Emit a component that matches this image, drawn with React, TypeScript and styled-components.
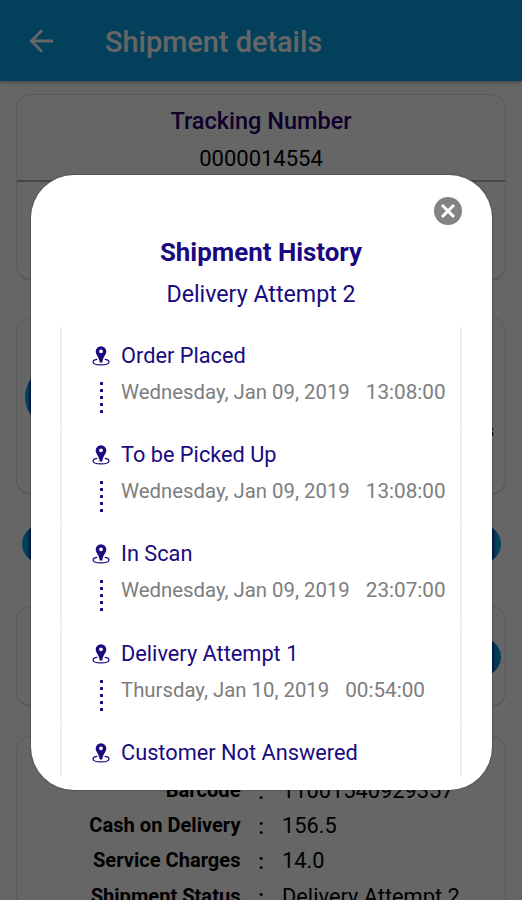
import React from "react";
import styled, { createGlobalStyle } from "styled-components";

const Global = createGlobalStyle`
  *, *::before, *::after { box-sizing: border-box; }
  body { margin: 0; background: #fff; }
`;

const NAVY = "#190a80";

const Screen = styled.div`
  position: relative;
  width: 522px;
  height: 900px;
  overflow: hidden;
  display: flex;
  flex-direction: column;
  background: #fff;
  font-family: Roboto, "Liberation Sans", sans-serif;
  color: #000;
`;

const AppBar = styled.header`
  flex: none;
  display: flex;
  align-items: center;
  gap: 52px;
  height: 81px;
  padding: 3px 28px 0;
  background: #07a0e6;
  color: #fff;
  box-shadow: 0 1px 4px rgba(0, 0, 0, 0.4);
`;

const BackIcon = styled.svg`
  flex: none;
  width: 25px;
  height: 26px;
  margin-top: -3px;
`;

const AppTitle = styled.h1`
  margin: 0;
  font-size: 28.9px;
  font-weight: 500;
  line-height: 34px;
`;

const Content = styled.main`
  flex: none;
  display: flex;
  flex-direction: column;
  padding: 13px 16px 0;
`;

const Card = styled.section<{ $height: number; $gap: number }>`
  flex: none;
  display: flex;
  flex-direction: column;
  width: 490px;
  height: ${(p) => p.$height}px;
  margin-bottom: ${(p) => p.$gap}px;
  border: 1px solid #e0e0e0;
  border-bottom-color: #d0d0d0;
  border-radius: 15px;
  box-shadow: 0 1px 1px rgba(0, 0, 0, 0.14);
`;

const TrackingHead = styled.div`
  height: 87px;
  padding-top: 11px;
  border-bottom: 2px solid #b0b0b0;
  text-align: center;
`;

const TrackingLabel = styled.div`
  font-size: 23.5px;
  line-height: 30px;
  font-weight: 500;
  color: #26006e;
`;

const TrackingValue = styled.div`
  margin-top: 8px;
  font-size: 22px;
  line-height: 30px;
`;

const StageRow = styled.div`
  flex: 1;
  display: flex;
  justify-content: space-between;
  align-items: center;
  padding: 0 11px 17px 8px;
  font-size: 18px;
`;

const StageDot = styled.span`
  width: 62px;
  height: 62px;
  border-radius: 50%;
  background: linear-gradient(90deg, #07a0e6 3px, #0a2ca8 6px);
`;

const StageCaption = styled.span`
  padding-top: 66px;
  font-weight: 500;
`;

const Pill = styled.div<{ $gap: number }>`
  flex: none;
  width: 479px;
  height: 38px;
  margin: 0 0 ${(p) => p.$gap}px 6px;
  border-radius: 19px;
  background: linear-gradient(90deg, #07a0e6 5px, #0a2ca8 9px, #0a2ca8 470px, #07a0e6 474px);
`;

const ActionRow = styled.div`
  flex: 1;
  display: flex;
  justify-content: flex-end;
  align-items: center;
  padding: 2px 4px 0;
`;

const RoundAction = styled.span`
  width: 38px;
  height: 38px;
  border-radius: 50%;
  background: linear-gradient(90deg, #0a2ca8 28px, #0788d8 32px, #07a0d6);
`;

const Details = styled.dl`
  display: grid;
  grid-template-columns: 223.5px 41.5px 1fr;
  grid-auto-rows: 35.2px;
  margin: 0;
  padding-top: 35px;
  line-height: 35.2px;
`;

const Term = styled.dt`
  padding-top: 1px;
  text-align: right;
  font-size: 20.1px;
  font-weight: 700;
`;

const Colon = styled.span`
  padding-top: 2px;
  text-align: center;
  font-size: 22px;
  font-weight: 500;
`;

const Value = styled.dd`
  margin: 0;
  padding-top: 1px;
  font-size: 21.8px;
  white-space: nowrap;
`;

const Overlay = styled.div`
  position: absolute;
  inset: 0;
  display: flex;
  justify-content: center;
  align-items: flex-start;
  padding: 175px 0 0 1px;
  background: rgba(0, 0, 0, 0.6);
`;

const Dialog = styled.div`
  display: flex;
  flex-direction: column;
  width: 461px;
  height: 615px;
  padding: 22px 30px 13px 29px;
  border-radius: 43px;
  background: #fff;
  color: ${NAVY};
  box-shadow: 0 0 2px rgba(0, 0, 0, 0.5);
`;

const CloseButton = styled.button`
  align-self: flex-end;
  width: 28px;
  height: 28px;
  padding: 0;
  border: 0;
  background: none;

  svg { display: block; }
`;

const DialogTitle = styled.h2`
  margin: 12px 0 0;
  text-align: center;
  font-size: 25.9px;
  line-height: 30px;
  font-weight: 700;
`;

const DialogSubtitle = styled.p`
  margin: 12px 0 0;
  text-align: center;
  font-size: 23.2px;
  line-height: 30px;
`;

const History = styled.ul`
  flex: 1;
  min-height: 0;
  overflow: hidden;
  margin: 18px 0 0;
  padding: 0;
  list-style: none;
`;

const Step = styled.li`
  display: grid;
  grid-template-columns: 21px 1fr;
  grid-template-rows: 30px 30px;
  column-gap: 9px;
  row-gap: 6px;
  height: 99.2px;
  padding: 14px 0 0 29px;
  border: solid #eeeeee;
  border-width: 0 2px;
  border-radius: 0 0 3px 3px;
`;

const StepName = styled.span`
  font-size: 21.75px;
  line-height: 30px;
`;

const StepTime = styled.span`
  display: flex;
  gap: 16px;
  font-size: 20.35px;
  line-height: 30px;
  color: #7d7d7d;
  white-space: nowrap;
`;

const Clock = styled.span`
  font-size: 20.7px;
`;

const PinIcon = styled.svg`
  width: 18px;
  height: 20px;
  margin: 5px 0 0 1px;
`;

const Trail = styled.span`
  display: flex;
  flex-direction: column;
  align-items: center;
  gap: 4px;
  width: 21px;
  padding-top: 5px;
`;

const TrailDot = styled.i`
  flex: none;
  width: 3px;
  height: 3px;
  border-radius: 0.5px;
  background: ${NAVY};
`;

const steps = [
  { name: "Order Placed", date: "Wednesday, Jan 09, 2019", time: "13:08:00" },
  { name: "To be Picked Up", date: "Wednesday, Jan 09, 2019", time: "13:08:00" },
  { name: "In Scan", date: "Wednesday, Jan 09, 2019", time: "23:07:00" },
  { name: "Delivery Attempt 1", date: "Thursday, Jan 10, 2019", time: "00:54:00" },
  { name: "Customer Not Answered", date: "", time: "" },
];

const details = [
  ["Barcode", "11001540929357"],
  ["Cash on Delivery", "156.5"],
  ["Service Charges", "14.0"],
  ["Shipment Status", "Delivery Attempt 2"],
];

function Pin() {
  return (
    <PinIcon viewBox="0 0 18 20">
      <path
        fill={NAVY}
        fillRule="evenodd"
        d="M9 .3a5.3 5.300 0 0 1 5.300 5.300c0 3.300-3.300 5.200-4 10.800H7.700c-.7-5.600-4-7.500-4-10.800A5.300 5.300 0 0 1 9 .3Zm0 3.100a1.900 1.900 0 1 0 0 3.800 1.900 1.900 0 0 0 0-3.800Z"
      />
      <path
        fill="none"
        stroke={NAVY}
        strokeWidth="1.200"
        strokeLinecap="round"
        d="M4.800 13.300C2.500 13.700 1 14.600 1 15.700c0 1.800 3.400 3.200 8 3.200s8-1.400 8-3.200c0-1.100-1.500-2-3.800-2.400"
      />
    </PinIcon>
  );
}

export default function App() {
  return (
    <Screen>
      <Global />
      <AppBar>
        <BackIcon viewBox="0 0 25 26" fill="none" stroke="#fff" strokeWidth="2.800">
          <path d="M25 13H4M14 2.200 3.400 13 14 23.800" />
        </BackIcon>
        <AppTitle>Shipment details</AppTitle>
      </AppBar>
      <Content>
        <Card $height={186} $gap={37}>
          <TrackingHead>
            <TrackingLabel>Tracking Number</TrackingLabel>
            <TrackingValue>0000014554</TrackingValue>
          </TrackingHead>
        </Card>
        <Card $height={177} $gap={31}>
          <StageRow>
            <StageDot />
            <StageCaption>s</StageCaption>
          </StageRow>
        </Card>
        <Pill $gap={43} />
        <Card $height={100} $gap={30}>
          <ActionRow>
            <RoundAction />
          </ActionRow>
        </Card>
        <Card $height={260} $gap={0}>
          <Details>
            {details.map(([term, value]) => (
              <React.Fragment key={term}>
                <Term>{term}</Term>
                <Colon>:</Colon>
                <Value>{value}</Value>
              </React.Fragment>
            ))}
          </Details>
        </Card>
      </Content>
      <Overlay>
        <Dialog role="dialog">
          <CloseButton aria-label="Close">
            <svg width="28" height="28" viewBox="0 0 28 28">
              <circle cx="14" cy="14" r="14" fill="#838383" />
              <path d="m8 8 12 12m0-12-12 12" stroke="#fff" strokeWidth="3" />
            </svg>
          </CloseButton>
          <DialogTitle>Shipment History</DialogTitle>
          <DialogSubtitle>Delivery Attempt 2</DialogSubtitle>
          <History>
            {steps.map((step) => (
              <Step key={step.name}>
                <Pin />
                <StepName>{step.name}</StepName>
                <Trail>
                  {step.time && [0, 1, 2, 3, 4].map((dot) => <TrailDot key={dot} />)}
                </Trail>
                <StepTime>
                  <span>{step.date}</span>
                  <Clock>{step.time}</Clock>
                </StepTime>
              </Step>
            ))}
          </History>
        </Dialog>
      </Overlay>
    </Screen>
  );
}
